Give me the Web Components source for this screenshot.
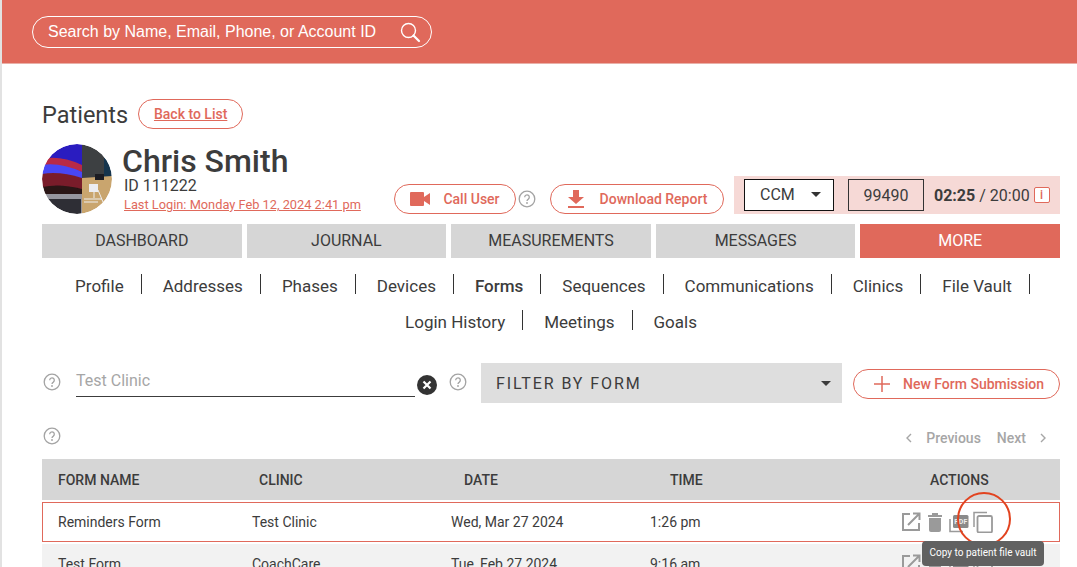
<!DOCTYPE html>
<html><head><meta charset="utf-8"><style>
html,body{margin:0;padding:0;width:1077px;height:567px;overflow:hidden;background:#fff;font-family:Roboto,"Liberation Sans",sans-serif;color:#3c3c3c}
</style></head><body>
<app-shell>
<top-bar></top-bar>
<patient-head></patient-head>
<main-tabs></main-tabs>
<sub-nav></sub-nav>
<filter-row></filter-row>
<pager-row></pager-row>
<forms-table></forms-table>
</app-shell>
<script>
const def=(name,html)=>customElements.define(name,class extends HTMLElement{constructor(){super();this.attachShadow({mode:'open'}).innerHTML=html;}});
const help=(s=18)=>`<svg width="${s}" height="${s}" viewBox="0 0 18 18" fill="none" style="display:block;flex:none"><circle cx="9" cy="9" r="7.8" stroke="#a3a3a3" stroke-width="1.3"/><path d="M6.7 7.2a2.3 2.3 0 1 1 3.6 1.9c-.8.5-1.3.9-1.3 2" stroke="#a3a3a3" stroke-width="1.3"/><circle cx="9" cy="13" r=".9" fill="#a3a3a3"/></svg>`;
def('app-shell',`<style>:host{display:block;height:567px;overflow:hidden;border-left:2px solid #e2e2e2;box-sizing:border-box}</style><slot></slot>`);
def('top-bar',`<style>:host{display:block;background:#e0695b;height:64px;padding:16px 0 0 30px;box-sizing:border-box;border-bottom:1px solid #e9b0a8}
.s{width:400px;height:32px;box-sizing:border-box;border:1.5px solid #fff;border-radius:16px;display:flex;align-items:center;justify-content:space-between;padding:0 10px 0 15px;color:#fff;font:16px "Helvetica Neue","Liberation Sans",sans-serif}</style>
<div class="s"><span>Search by Name, Email, Phone, or Account ID</span><svg width="22" height="22" viewBox="0 0 22 22" fill="none"><circle cx="9.5" cy="9.5" r="7" stroke="#fff" stroke-width="1.4"/><path d="M14.5 14.5l5.5 5.5" stroke="#fff" stroke-width="2.2" stroke-linecap="round"/></svg></div>`);
def('patient-head',`<style>:host{display:block;padding:35px 17px 0 40px}
a{color:#e0695b}
.t{display:flex;align-items:center;gap:10px;height:30px}
.t h1{font:400 23.5px/32px Roboto;margin:2px 0 0;color:#3c3c3c}
.pill{border:1px solid #e0695b;border-radius:16px;height:30px;box-sizing:border-box;display:flex;align-items:center;justify-content:center;color:#e0695b;font:500 14px Roboto;background:#fff}
.back{width:105px}
.r{display:flex;align-items:flex-end;margin-top:15px;height:70px}
.av{width:70px;height:70px;flex:none;margin-right:10px;border-radius:50%;display:block}
.who{width:272px;flex:none;height:70px}
.who b{display:block;font:500 32px/34px Roboto;color:#3c3c3c}
.who span{display:block;font:400 16px/16px Roboto;margin:0 0 0 2px}
.who a{display:block;font:400 12.8px/18px Roboto;margin:2px 0 0 2px;white-space:nowrap}
.call{width:122px;gap:13px}.dl{width:174px;gap:15px;margin-left:14px}
.h{margin:0 0 6px 2px}
.p{margin-left:10px;width:326px;height:38px;background:#f6d9d6;display:flex;align-items:center;box-sizing:border-box;padding-left:10px;font:16px Roboto;color:#3c3c3c}
.ccm{width:90px;height:32px;box-sizing:border-box;border:1.5px solid #111;background:#fff;display:flex;align-items:center;justify-content:space-between;padding:0 12px 1px 15px}
.ccm i{border:5px solid transparent;border-top:5px solid #333;border-bottom:0}
.c{width:76px;height:32px;box-sizing:border-box;border:1px solid #333;margin:0 10px 0 14px;display:flex;align-items:center;justify-content:center}
.i{margin-left:4px;width:16px;height:16px;box-sizing:border-box;border:1px solid #e0695b;border-radius:2px;color:#e0695b;font:500 12px/14px Roboto;text-align:center;background:#fff}
</style>
<div class="t"><h1>Patients</h1><a class="pill back" href="#">Back to List</a></div>
<div class="r">
<svg class="av" viewBox="0 0 70 70"><defs><clipPath id="c"><circle cx="35" cy="35" r="35"/></clipPath><filter id="bl"><feGaussianBlur stdDeviation=".6"/></filter></defs><g clip-path="url(#c)"><g filter="url(#bl)">
<rect width="70" height="70" fill="#2b2d31"/>
<rect width="40" height="52" fill="#2a1cc0"/>
<path d="M0 15Q18 11 40 21V28Q18 19 0 24Z" fill="#b82c46"/>
<path d="M0 21Q18 18 40 28V35Q18 28 0 32Z" fill="#4a46f5"/>
<path d="M0 30Q18 27 40 34V52H0Z" fill="#7a1f2c"/>
<path d="M0 43Q18 39 40 45V52H0Z" fill="#2a1216"/>
<path d="M0 50H40V70H0Z" fill="#96969e"/>
<path d="M6 55H39V70H14Z" fill="#2e2e34"/>
<rect x="40" y="0" width="30" height="34" fill="#3d3f42"/>
<path d="M62 14h8v20h-8z" fill="#16344e"/>
<path d="M40 34L70 32V70H40Z" fill="#c9a56e"/>
<path d="M53 30h9v6h-9z" fill="#1f1f22"/>
<rect x="47" y="40" width="9" height="8" fill="#ecedf2"/>
<path d="M42 55h18M42 58h14M52 48v6M56 46l5 12" stroke="#eee" stroke-width="1"/></g></g></svg>
<div class="who"><b>Chris Smith</b><span>ID 111222</span><a href="#">Last Login: Monday Feb 12, 2024 2:41 pm</a></div>
<div class="pill call"><svg width="20" height="14" viewBox="0 0 20 14"><rect width="14" height="14" rx="1" fill="#e0695b"/><path d="M14 5l6-4v12l-6-4z" fill="#e0695b"/></svg><span>Call User</span></div>
<span class="h">${help(18)}</span>
<div class="pill dl"><svg width="18" height="20" viewBox="0 0 18 20"><path d="M6 1h6v7h5l-8 7-8-7h5z" fill="#e0695b"/><rect x="1" y="17" width="16" height="2" fill="#e0695b"/></svg><span>Download Report</span></div>
<div class="p"><div class="ccm"><span>CCM</span><i></i></div><div class="c">99490</div><span><b style="font-weight:700">02:25</b> / 20:00</span><div class="i">i</div></div>
</div>`);
def('main-tabs',`<style>:host{display:flex;gap:5px;padding:10px 17px 0 40px}
div{flex:1;height:34px;padding-bottom:2px;box-sizing:border-box;background:#d6d6d6;display:flex;align-items:center;justify-content:center;font:16px Roboto;color:#3c3c3c}
.on{background:#e0695b;color:#fff}</style>
<div>DASHBOARD</div><div>JOURNAL</div><div>MEASUREMENTS</div><div>MESSAGES</div><div class="on">MORE</div>`);
def('sub-nav',`<style>:host{display:block;font:17px/36px Roboto;color:#3c3c3c;width:1018px;margin-left:40px;padding:10px 0 0;box-sizing:border-box;height:82px}
div{display:flex;justify-content:center}
.one{padding-right:18px}.two{padding-right:3px}
span{padding:0 18px 0 21px;position:relative;white-space:nowrap}
span:not(.l)::after{content:"";position:absolute;right:0;top:6px;height:20px;width:1px;background:#333}
b{font-weight:500}</style>
<div class="one"><span>Profile</span><span>Addresses</span><span>Phases</span><span>Devices</span><span><b>Forms</b></span><span>Sequences</span><span>Communications</span><span>Clinics</span><span>File Vault</span></div>
<div class="two"><span>Login History</span><span>Meetings</span><span class="l">Goals</span></div>`);
def('filter-row',`<style>:host{display:flex;align-items:center;padding:23px 17px 0 41px;height:40px}
.in{width:339px;height:34px;margin:0 0 0 15px;border-bottom:1px solid #3c3c3c;color:#a6a6a6;font:16px/35px Roboto;flex:none;box-sizing:border-box;align-self:flex-start}
.x{margin:3px 12px 0 2px;flex:none;display:block}
.sel{margin-left:14px;width:361px;height:40px;box-sizing:border-box;background:#dedede;display:flex;align-items:center;justify-content:space-between;padding:0 11px 0 15px;font:16px Roboto;letter-spacing:1.9px;color:#3c3c3c}
.sel i{border:5px solid transparent;border-top:5px solid #3c3c3c;border-bottom:0}
.new{margin:2px 0 0 11px;width:207px;height:30px;box-sizing:border-box;border:1px solid #e0695b;border-radius:16px;display:flex;align-items:center;color:#e0695b;font:500 14px Roboto;padding-left:20px;gap:13px}
.hp{margin-top:-2px}</style>
<span class="hp">${help(18)}</span><div class="in">Test Clinic</div>
<svg class="x" width="20" height="20" viewBox="0 0 20 20"><circle cx="10" cy="10" r="10" fill="#333"/><path d="M6.5 6.5l7 7M13.500 6.5l-7 7" stroke="#fff" stroke-width="2.2"/></svg>
<span class="hp">${help(18)}</span><div class="sel"><span>FILTER BY FORM</span><i></i></div>
<div class="new"><svg width="16" height="16" viewBox="0 0 16 16"><path d="M8 0v16M0 8h16" stroke="#e0695b" stroke-width="1.5"/></svg><span>New Form Submission</span></div>`);
def('pager-row',`<style>:host{display:flex;align-items:center;justify-content:space-between;padding:23px 30px 0 41px;height:20px;font:500 14px Roboto;color:#a6a6a6}
.p{display:flex;align-items:center;padding-top:4px}</style>
${help(18)}<div class="p"><svg width="8" height="10" viewBox="0 0 8 10" fill="none"><path d="M6 1L2 5l4 4" stroke="#a6a6a6" stroke-width="1.4"/></svg><span style="margin-left:13px">Previous</span><span style="margin-left:16px">Next</span><svg width="8" height="10" viewBox="0 0 8 10" fill="none" style="margin-left:13px"><path d="M2 1l4 4-4 4" stroke="#a6a6a6" stroke-width="1.4"/></svg></div>`);
const actions=`<svg width="20" height="20" viewBox="0 0 20 20" fill="none"><path d="M9 2H2v16h16v-7" stroke="#9a9a9a" stroke-width="2"/><path d="M7 13L18 2M12 1.500h6.500V8" stroke="#9a9a9a" stroke-width="2"/></svg>
<svg width="16" height="20" viewBox="0 0 16 20" style="margin-left:6px"><path d="M1 3h14v2H1zM5 1h6v2H5z" fill="#9a9a9a"/><path d="M2 6h12v12a2 2 0 0 1-2 2H4a2 2 0 0 1-2-2z" fill="#9a9a9a"/></svg>
<svg width="22" height="22" viewBox="0 0 22 22" fill="none" style="margin-left:6px"><path d="M1 8v12.500h13" stroke="#9a9a9a" stroke-width="1.600"/><rect x="4" y="4" width="15.500" height="13" rx="1.500" fill="#8a8a8a"/><text x="11.800" y="13" font-family="Roboto" font-weight="700" font-size="7" fill="#eee" text-anchor="middle">PDF</text></svg>
<svg width="20" height="22" viewBox="0 0 20 22" fill="none" style="margin-left:2px"><path d="M1 16V1.500H14" stroke="#9a9a9a" stroke-width="1.500"/><rect x="4.500" y="5" width="14.500" height="16.500" rx="1.500" stroke="#9a9a9a" stroke-width="1.800"/></svg>`;
def('forms-table',`<style>:host{display:block;margin:13px 17px 0 40px;position:relative;font:14px Roboto;color:#3c3c3c}
.hd,.row{display:grid;align-items:center}
.hd{grid-template-columns:201px 205px 206px 232px 174px;height:41px;background:#d6d6d6;font-weight:500;color:#3c3c3c}
.hd span:first-child,.hd span:nth-child(2),.hd span:nth-child(3){padding-left:16px}
.hd span:nth-child(4){padding-left:16px}
.hd span:nth-child(5){padding-left:44px}
.row{height:40px;box-sizing:border-box;margin-top:2px;grid-template-columns:209px 199px 199px 245px 166px}
.row>span:first-child{padding-left:15px}
.a{border:1px solid #e0695b;background:#fff}
.b{background:#f2f2f2;border:1px solid #f2f2f2}
.ic{display:flex;align-items:center;margin-left:6px;height:24px}
.ic svg{flex:none}
.ring{position:absolute;left:915px;top:33px;width:54px;height:54px;box-sizing:border-box;border:2px solid #e2431f;border-radius:50%}
.tip{position:absolute;left:880px;top:82px;width:122px;height:25px;border-radius:4px;background:#616161;color:#fff;font:10px/24px Roboto;text-align:center;white-space:nowrap}
</style>
<div class="hd"><span>FORM NAME</span><span>CLINIC</span><span>DATE</span><span>TIME</span><span>ACTIONS</span></div>
<div class="row a"><span>Reminders Form</span><span>Test Clinic</span><span>Wed, Mar 27 2024</span><span>1:26 pm</span><span class="ic">${actions}</span></div>
<div class="row b"><span>Test Form</span><span>CoachCare</span><span>Tue, Feb 27 2024</span><span>9:16 am</span><span class="ic">${actions}</span></div>
<div class="ring"></div><div class="tip">Copy to patient file vault</div>`);
</script>
</body></html>
